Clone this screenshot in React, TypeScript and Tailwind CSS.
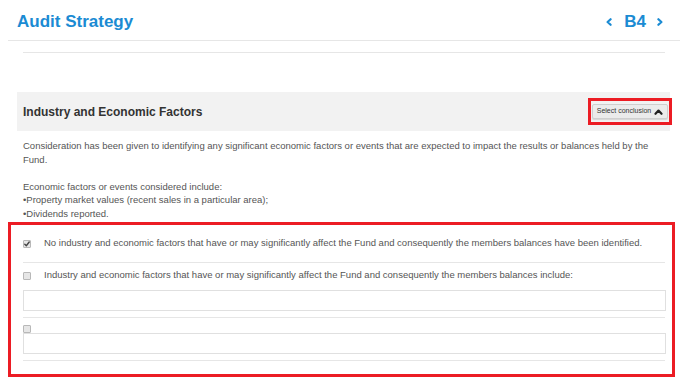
import React from "react";

function Chevron({ dir }: { dir: "left" | "right" | "up" }) {
  if (dir === "up") {
    return (
      <svg width="9" height="6" viewBox="0 0 9 6" fill="none" stroke="#222" strokeWidth="2.2" strokeLinecap="round" strokeLinejoin="round">
        <polyline points="1.5,4.8 4.5,1.6 7.5,4.8" />
      </svg>
    );
  }
  return (
    <svg width="6" height="8" viewBox="0 0 6 8" fill="none" stroke="#1b8bd3" strokeWidth="2.2" strokeLinecap="round" strokeLinejoin="round">
      {dir === "left" ? <polyline points="4.6,1.2 1.6,4 4.6,6.8" /> : <polyline points="1.4,1.2 4.4,4 1.4,6.8" />}
    </svg>
  );
}

function Box({ checked = false }: { checked?: boolean }) {
  return (
    <span className="w-[8px] h-[8px] shrink-0 border border-[#b8b8b8] bg-[#e6e6e6] rounded-[1px] flex items-center justify-center">
      {checked && (
        <svg width="6" height="6" viewBox="0 0 6 6" fill="none" stroke="#444" strokeWidth="1.4" strokeLinecap="round" strokeLinejoin="round">
          <polyline points="0.8,3.2 2.3,4.7 5.2,1" />
        </svg>
      )}
    </span>
  );
}

export default function App() {
  return (
    <div className="w-[690px] h-[390px] bg-white overflow-hidden font-['Liberation_Sans',Arial,sans-serif]">
      {/* Page header */}
      <header className="ml-[8px] w-[672px] h-[41px] border-b border-[#e6e6e6] flex items-start justify-between pl-[9px] pr-[17px] pt-[12px]">
        <h1 className="text-[17px] leading-[20px] font-bold text-[#1b8bd3]">Audit Strategy</h1>
        <div className="flex items-center h-[20px]">
          <Chevron dir="left" />
          <span className="ml-[12px] mr-[11px] text-[17px] leading-[20px] font-bold text-[#1b8bd3]">B4</span>
          <Chevron dir="right" />
        </div>
      </header>

      <div className="ml-[23px] w-[642px] mt-[11px] border-t border-[#e6e6e6]" />

      {/* Section header */}
      <div className="ml-[17px] w-[653px] mt-[39px] h-[39px] bg-[#f2f2f2] flex items-center justify-between pl-[6px]">
        <h2 className="text-[12px] font-bold text-[#333]">Industry and Economic Factors</h2>
        <div className="mr-[-2px] border-[3px] border-[#ec1c24] px-[1px] py-[3px]">
          <button className="w-[76px] h-[15px] bg-[#ebebeb] border border-[#cfcfcf] rounded-[2px] shadow-[0_1px_1px_rgba(0,0,0,0.12)] flex items-center justify-center gap-[3px] text-[7px] text-[#333]">
            Select conclusion
            <Chevron dir="up" />
          </button>
        </div>
      </div>

      <p className="ml-[23px] w-[642px] mt-[8px] text-[9.5px] leading-[13.5px] text-[#555]">
        Consideration has been given to identifying any significant economic factors or events that are expected to impact the results or balances held by the Fund.
        <br />
        <br />
        Economic factors or events considered include:
        <br />
        •Property market values (recent sales in a particular area);
        <br />
        •Dividends reported.
      </p>

      {/* Conclusions */}
      <div className="ml-[8px] w-[667px] mt-[2px] border-[3px] border-[#ec1c24] pl-[12px] pr-[6px] pb-[13px] text-[9.5px] text-[#555]">
        <div className="h-[38px] w-[642px] border-b border-[#e6e6e6] flex items-center gap-[13px]">
          <Box checked />
          <span>No industry and economic factors that have or may significantly affect the Fund and consequently the members balances have been identified.</span>
        </div>
        <div className="w-[642px] border-b border-[#e6e6e6] pt-[6px] pb-[6px]">
          <div className="h-[13px] flex items-center gap-[13px]">
            <Box />
            <span>Industry and economic factors that have or may significantly affect the Fund and consequently the members balances include:</span>
          </div>
          <div className="mt-[8px] w-[643px] h-[21px] border border-[#e0e0e0]" />
        </div>
        <div className="w-[642px] border-b border-[#e6e6e6] pt-[7px] pb-[6px]">
          <Box />
          <div className="w-[643px] h-[21px] border border-[#e0e0e0]" />
        </div>
      </div>
    </div>
  );
}
